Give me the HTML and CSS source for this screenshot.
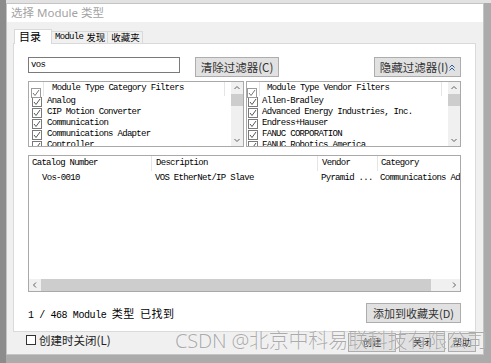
FILE: index.html
```html
<!DOCTYPE html>
<html>
<head>
<meta charset="utf-8">
<link rel="stylesheet" href="styles.css">
</head>
<body>
<div class="window">
  <div class="titlebar">选择 Module 类型</div>
  <div class="dlg">
    <div class="tabs">
      <div class="tab sel">目录</div>
      <div class="tab"><span class="m">Module</span><span class="tcjk gap">发现</span></div>
      <div class="tab"><span class="tcjk">收藏夹</span></div>
    </div>
    <div class="panel">
      <div class="row1">
        <div class="search m">vos</div>
        <div class="btn btn-clear">清除过滤器(C)</div>
        <div class="spacer"></div>
        <div class="btn btn-hide">隐藏过滤器(I)<svg class="dchev" width="6" height="7" viewBox="0 0 6 7"><polyline points="0.5,3.5 3,1 5.5,3.5" fill="none" stroke="#2a5aa0" stroke-width="1"/><polyline points="0.5,6.5 3,4 5.5,6.5" fill="none" stroke="#2a5aa0" stroke-width="1"/></svg></div>
      </div>
      <div class="row2">
        <div class="flist left">
          <div class="fbody">
            <div class="fhead">
              <div class="hc1"><span class="cb hcb"><svg width="8" height="8" viewBox="0 0 8 8"><polyline points="1,4 3,6.5 7,1" fill="none" stroke="#777" stroke-width="1"/></svg></span></div>
              <div class="hc2 m">Module Type Category Filters</div>
            </div>
            <div class="fitem"><span class="cb"><svg width="8" height="8" viewBox="0 0 8 8"><polyline points="1,4 3,6.5 7,1" fill="none" stroke="#555" stroke-width="1"/></svg></span><span class="m">Analog</span></div>
            <div class="fitem"><span class="cb"><svg width="8" height="8" viewBox="0 0 8 8"><polyline points="1,4 3,6.5 7,1" fill="none" stroke="#555" stroke-width="1"/></svg></span><span class="m">CIP Motion Converter</span></div>
            <div class="fitem"><span class="cb"><svg width="8" height="8" viewBox="0 0 8 8"><polyline points="1,4 3,6.5 7,1" fill="none" stroke="#555" stroke-width="1"/></svg></span><span class="m">Communication</span></div>
            <div class="fitem"><span class="cb"><svg width="8" height="8" viewBox="0 0 8 8"><polyline points="1,4 3,6.5 7,1" fill="none" stroke="#555" stroke-width="1"/></svg></span><span class="m">Communications Adapter</span></div>
            <div class="fitem"><span class="cb"><svg width="8" height="8" viewBox="0 0 8 8"><polyline points="1,4 3,6.5 7,1" fill="none" stroke="#555" stroke-width="1"/></svg></span><span class="m">Controller</span></div>
          </div>
          <div class="vscroll">
            <svg class="arr" width="12" height="12" viewBox="0 0 12 12"><polyline points="3.5,7 6,4.5 8.5,7" fill="none" stroke="#606060" stroke-width="1"/></svg>
            <div class="thumb"></div>
            <div class="track"></div>
            <svg class="arr" width="12" height="12" viewBox="0 0 12 12"><polyline points="3.5,5 6,7.5 8.5,5" fill="none" stroke="#606060" stroke-width="1"/></svg>
          </div>
        </div>
        <div class="flist right">
          <div class="fbody">
            <div class="fhead">
              <div class="hc1"><span class="cb hcb"><svg width="8" height="8" viewBox="0 0 8 8"><polyline points="1,4 3,6.5 7,1" fill="none" stroke="#777" stroke-width="1"/></svg></span></div>
              <div class="hc2 m">Module Type Vendor Filters</div>
            </div>
            <div class="fitem"><span class="cb"><svg width="8" height="8" viewBox="0 0 8 8"><polyline points="1,4 3,6.5 7,1" fill="none" stroke="#555" stroke-width="1"/></svg></span><span class="m">Allen-Bradley</span></div>
            <div class="fitem"><span class="cb"><svg width="8" height="8" viewBox="0 0 8 8"><polyline points="1,4 3,6.5 7,1" fill="none" stroke="#555" stroke-width="1"/></svg></span><span class="m">Advanced Energy Industries, Inc.</span></div>
            <div class="fitem"><span class="cb"><svg width="8" height="8" viewBox="0 0 8 8"><polyline points="1,4 3,6.5 7,1" fill="none" stroke="#555" stroke-width="1"/></svg></span><span class="m">Endress+Hauser</span></div>
            <div class="fitem"><span class="cb"><svg width="8" height="8" viewBox="0 0 8 8"><polyline points="1,4 3,6.5 7,1" fill="none" stroke="#555" stroke-width="1"/></svg></span><span class="m">FANUC CORPORATION</span></div>
            <div class="fitem"><span class="cb"><svg width="8" height="8" viewBox="0 0 8 8"><polyline points="1,4 3,6.5 7,1" fill="none" stroke="#555" stroke-width="1"/></svg></span><span class="m">FANUC Robotics America</span></div>
          </div>
          <div class="vscroll">
            <svg class="arr" width="12" height="12" viewBox="0 0 12 12"><polyline points="3.5,7 6,4.5 8.5,7" fill="none" stroke="#606060" stroke-width="1"/></svg>
            <div class="thumb"></div>
            <div class="track"></div>
            <svg class="arr" width="12" height="12" viewBox="0 0 12 12"><polyline points="3.5,5 6,7.5 8.5,5" fill="none" stroke="#606060" stroke-width="1"/></svg>
          </div>
        </div>
      </div>
      <div class="catalog">
        <div class="cat-inner">
          <div class="chead m">
            <div class="c1">Catalog Number</div>
            <div class="c2">Description</div>
            <div class="c3">Vendor</div>
            <div class="c4">Category</div>
          </div>
          <div class="crow m">
            <div class="c1 ind">Vos-0010</div>
            <div class="c2">VOS EtherNet/IP Slave</div>
            <div class="c3">Pyramid ...</div>
            <div class="c4">Communications Adapter</div>
          </div>
        </div>
        <div class="hscroll">
          <svg class="arr" width="12" height="12" viewBox="0 0 12 12"><polyline points="7,3.5 4.5,6 7,8.5" fill="none" stroke="#606060" stroke-width="1"/></svg>
          <div class="hthumb"></div>
          <svg class="arr" width="12" height="12" viewBox="0 0 12 12"><polyline points="5,3.5 7.5,6 5,8.5" fill="none" stroke="#606060" stroke-width="1"/></svg>
        </div>
      </div>
      <div class="row4">
        <div class="found"><span class="fm">1 / 468 Module</span> <span class="fc">类型</span> <span class="fc">已找到</span></div>
        <div class="btn btn-add">添加到收藏夹(D)</div>
      </div>
    </div>
    <div class="bottom">
      <div class="closecb"><span class="cb2"></span>创建时关闭(L)</div>
      <div class="spacer"></div>
      <div class="bbtn b1">创建</div>
      <div class="bbtn b2">关闭</div>
      <div class="bbtn b3">帮助</div>
      <div class="watermark">CSDN @北京中科易联科技有限公司</div>
    </div>
  </div>
</div>
</body>
</html>
```
FILE: styles.css
```css
html, body {
  margin: 0;
  padding: 0;
}
body {
  width: 491px;
  height: 363px;
  background: #ababab;
  border-left: 6px solid #8c8c8c;
  box-sizing: border-box;
  overflow: hidden;
  font-family: "Noto Sans CJK SC", "Noto Sans", sans-serif;
  position: relative;
}
body::before {
  content: "";
  display: block;
  height: 3px;
  background: #e2e2e2;
}
.window {
  width: 478px;
  height: 352px;
  background: #f0f0f0;
  border: 1px solid #c4c4c4;
  box-sizing: border-box;
  display: flex;
  flex-direction: column;
}
.titlebar {
  height: 18px;
  background: #ffffff;
  color: #a3a3a3;
  font-size: 11.5px;
  line-height: 18px;
  padding-left: 4px;
  font-family: "Noto Sans", "Noto Sans CJK SC", sans-serif;
}
.dlg {
  padding: 8px 7px 0 6px;
  display: flex;
  flex-direction: column;
  position: relative;
  flex: 1;
}
.m {
  font-family: "Liberation Mono", "Noto Sans CJK SC", monospace;
  font-size: 9px;
  letter-spacing: -0.7px;
  color: #000;
}
.tabs {
  display: flex;
  align-items: flex-end;
  height: 13px;
  padding-left: 1px;
  position: relative;
  z-index: 2;
}
.tab {
  height: 11px;
  box-sizing: content-box;
  border: 1px solid #d9d9d9;
  border-bottom: none;
  background: #f0f0f0;
  font-size: 10px;
  line-height: 11px;
  padding: 0 2px 0 3px;
  display: flex;
  align-items: center;
  margin-left: -1px;
  white-space: nowrap;
  flex: none;
}
.tab.sel {
  height: 14px;
  width: 30px;
  background: #ffffff;
  font-size: 11px;
  margin-bottom: -1px;
  margin-left: 0;
  padding: 0 2px 0 4px;
  align-items: flex-start;
  line-height: 13px;
}
.tcjk {
  font-size: 9.5px;
}
.gap { margin-left: 3px; }
.panel {
  height: 289px;
  background: #ffffff;
  border: 1px solid #dadada;
  box-sizing: border-box;
  padding: 13px 14px 0 14px;
  display: flex;
  flex-direction: column;
}
.row1 {
  display: flex;
  align-items: flex-start;
  height: 20px;
}
.search {
  width: 152px;
  height: 16px;
  box-sizing: border-box;
  border: 1px solid #7a7a7a;
  line-height: 14px;
  padding-left: 2px;
}
.btn {
  height: 20px;
  box-sizing: border-box;
  background: #e1e1e1;
  border: 1px solid #adadad;
  font-size: 11.5px;
  line-height: 18px;
  color: #333;
  text-align: center;
  white-space: nowrap;
  display: flex;
  align-items: center;
  justify-content: center;
}
.btn-clear {
  margin-left: 15px;
  width: 84px;
}
.btn-hide {
  width: 87px;
}
.dchev {
  margin-left: 1px;
}
.spacer {
  flex: 1;
}
.row2 {
  display: flex;
  gap: 2px;
  margin-top: 4px;
  height: 66px;
}
.flist {
  border: 1px solid #a9a9a9;
  box-sizing: border-box;
  display: flex;
  height: 66px;
  overflow: hidden;
}
.flist.left { width: 216px; }
.flist.right { width: 215px; }
.fbody {
  flex: 1;
  overflow: hidden;
  white-space: nowrap;
}
.fhead {
  display: flex;
  height: 14px;
}
.hc1 {
  width: 14px;
  border-right: 1px solid #e5e5e5;
  position: relative;
}
.hc2 {
  flex: 1;
  padding-left: 8px;
  line-height: 13px;
  border-right: 1px solid #e5e5e5;
  margin-right: 6px;
}
.right .hc2 { padding-left: 7px; }
.cb {
  display: inline-block;
  width: 10px;
  height: 10px;
  box-sizing: border-box;
  border: 1px solid #7a7a7a;
  vertical-align: top;
  margin: 0 5px 0 3px;
  background: #fff;
}
.cb svg {
  display: block;
  margin: 0;
}
.hcb {
  position: absolute;
  left: 0;
  top: 6px;
  margin: 0 0 0 2px;
  border-color: #9a9a9a;
}
.fitem {
  height: 11px;
  line-height: 11px;
  display: flex;
  align-items: center;
}
.fitem .cb { margin-left: 3px; }
.right .fitem .cb { margin: 0 4px 0 1px; }
.right .hc1 { width: 12px; }
.right .hcb { margin-left: 0; }
.vscroll {
  width: 12px;
  background: #f0f0f0;
  display: flex;
  flex-direction: column;
}
.vscroll .arr { display: block; }
.thumb {
  height: 12px;
  background: #cdcdcd;
}
.track { flex: 1; }
.catalog {
  margin-top: 8px;
  height: 137px;
  border: 1px solid #a9a9a9;
  box-sizing: border-box;
  display: flex;
  flex-direction: column;
}
.cat-inner {
  flex: 1;
  overflow: hidden;
  white-space: nowrap;
}
.chead, .crow {
  display: flex;
}
.chead {
  height: 15px;
  line-height: 15px;
}
.crow {
  height: 14px;
  line-height: 14px;
}
.c1 { width: 119px; padding-left: 3px; flex: none; }
.c2 { width: 161px; padding-left: 4px; flex: none; }
.c3 { width: 55px; padding-left: 4px; flex: none; }
.c4 { width: 100px; padding-left: 3px; flex: none; }
.chead > div { border-right: 1px solid #e5e5e5; }
.chead .c4 { border-right: none; }
.crow .c1 { width: 120px; }
.crow .c2 { width: 162px; }
.crow .c3 { width: 56px; }
.ind { padding-left: 13px !important; width: 109px !important; }
.hscroll {
  height: 12px;
  background: #f0f0f0;
  display: flex;
}
.hscroll .arr { display: block; }
.hthumb {
  flex: 1;
  background: #cdcdcd;
  margin-right: 17px;
}
.row4 {
  display: flex;
  align-items: flex-end;
  margin-top: 11px;
}
.found {
  flex: 1;
  font-size: 10px;
  line-height: 13px;
  padding-bottom: 1px;
  white-space: nowrap;
}
.fm {
  font-family: "Liberation Mono", monospace;
  font-size: 10px;
  letter-spacing: -0.4px;
}
.fc {
  font-size: 11px;
  letter-spacing: 0.5px;
  margin-left: 3px;
}
.btn-add {
  width: 95px;
  font-size: 11px;
}
.bottom {
  display: flex;
  align-items: flex-start;
  height: 22px;
  padding-top: 1px;
  position: relative;
  margin-left: 13px;
}
.closecb {
  font-size: 11.5px;
  line-height: 14px;
  display: flex;
  align-items: center;
  color: #222;
}
.cb2 {
  display: inline-block;
  width: 10px;
  height: 10px;
  box-sizing: border-box;
  border: 1px solid #333;
  margin-right: 3px;
  background: #fff;
}
.bbtn {
  height: 19px;
  box-sizing: border-box;
  background: #e1e1e1;
  border: 1px solid #adadad;
  font-size: 9.5px;
  line-height: 17px;
  text-align: center;
  color: #333;
}
.b1 { width: 48px; }
.b2 { width: 46px; margin-left: 3px; }
.b3 { width: 28px; margin-left: 3px; }
.watermark {
  position: absolute;
  left: 149px;
  top: -3px;
  font-size: 20px;
  line-height: 24px;
  font-weight: 300;
  color: rgba(135, 135, 135, 0.7);
  white-space: nowrap;
  font-family: "Noto Sans", "Noto Sans CJK SC", sans-serif;
  text-shadow: 0 0 1px #fff;
  letter-spacing: -0.2px;
}
```
